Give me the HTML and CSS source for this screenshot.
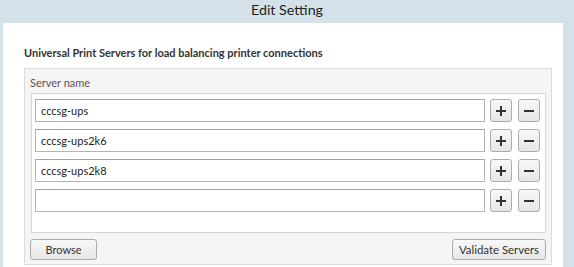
FILE: index.html
```html
<!DOCTYPE html>
<html lang="en">
<head>
  <meta charset="UTF-8" />
  <title>Edit Setting</title>
  <link rel="stylesheet" href="styles.css">
</head>
<body>
<div class="titlebar">Edit Setting</div>

<div class="panel">
  <h2 class="section-title">Universal Print Servers for load balancing printer connections</h2>

  <div class="group">
    <div class="group-header">Server name</div>

    <div class="server-list">
      <div class="server-row">
        <input type="text" class="server-input" value="cccsg-ups" />
        <button type="button" class="icon-btn add" title="Add"><span class="plus"></span></button>
        <button type="button" class="icon-btn remove" title="Remove"><span class="minus"></span></button>
      </div>
      <div class="server-row">
        <input type="text" class="server-input" value="cccsg-ups2k6" />
        <button type="button" class="icon-btn add" title="Add"><span class="plus"></span></button>
        <button type="button" class="icon-btn remove" title="Remove"><span class="minus"></span></button>
      </div>
      <div class="server-row">
        <input type="text" class="server-input" value="cccsg-ups2k8" />
        <button type="button" class="icon-btn add" title="Add"><span class="plus"></span></button>
        <button type="button" class="icon-btn remove" title="Remove"><span class="minus"></span></button>
      </div>
      <div class="server-row">
        <input type="text" class="server-input" value="" />
        <button type="button" class="icon-btn add" title="Add"><span class="plus"></span></button>
        <button type="button" class="icon-btn remove" title="Remove"><span class="minus"></span></button>
      </div>
    </div>

    <div class="group-footer">
      <button type="button" class="btn browse">Browse</button>
      <button type="button" class="btn validate">Validate Servers</button>
    </div>
  </div>
</div>
</body>
</html>
```
FILE: styles.css
```css
html, body {
  height: 100%;
}

body {
  margin: 0;
  font-family: 'Lato', sans-serif;
  font-size: 11px;
  color: #222;
  background-color: #d4e1e8;
  display: flex;
  flex-direction: column;
}

.titlebar {
  height: 23px;
  line-height: 20px;
  text-align: center;
  font-size: 14.3px;
  color: #1e1e1e;
}

.panel {
  flex: 1;
  margin: 0 11px 0 3px;
  padding: 23px 11px 0 21px;
  background: #fff;
}

.section-title {
  margin: 0 0 8px;
  font-size: 11px;
  line-height: 14px;
  font-weight: bold;
  color: #333;
}

.group {
  border: 1px solid #dcdcdc;
  background: #f5f5f5;
}

.group-header {
  padding: 7px 5px 3px;
  line-height: 14px;
  color: #555;
}

.server-list {
  margin: 0 5px 0 6px;
  padding: 5px 5px 20px 3px;
  border: 1px solid #d6d6d6;
  background: #fff;
  display: flex;
  flex-direction: column;
  gap: 7px;
}

.server-row {
  display: flex;
  height: 23px;
}

.server-input {
  flex: 1;
  min-width: 0;
  margin: 0;
  padding: 0 5px;
  box-sizing: border-box;
  height: 23px;
  border: 1px solid #b4b4b4;
  border-top-color: #a2a2a2;
  font-family: 'Lato', sans-serif;
  font-size: 11px;
  color: #222;
  outline: none;
}

.icon-btn,
.btn {
  box-sizing: border-box;
  margin: 0;
  padding: 0;
  border: 1px solid #acacac;
  border-radius: 3px;
  background: linear-gradient(#f8f8f8, #e6e6e6);
  cursor: pointer;
}

.icon-btn {
  width: 22px;
  height: 23px;
  position: relative;
}

.icon-btn.add {
  margin-left: 5px;
}

.icon-btn.remove {
  margin-left: 6px;
}

.plus,
.minus {
  position: absolute;
  left: 50%;
  top: 50%;
}

.minus {
  width: 10px;
  height: 2px;
  margin: -1px 0 0 -5px;
  background: #333;
}

.plus {
  width: 10px;
  height: 10px;
  margin: -5px 0 0 -5px;
}

.plus::before,
.plus::after {
  content: '';
  position: absolute;
  background: #333;
}

.plus::before {
  left: 0;
  top: 4px;
  width: 10px;
  height: 2px;
}

.plus::after {
  left: 4px;
  top: 0;
  width: 2px;
  height: 10px;
}

.group-footer {
  display: flex;
  justify-content: space-between;
  padding: 6px 5px 4px;
}

.btn {
  height: 21px;
  font-family: 'Lato', sans-serif;
  font-size: 11px;
  color: #333;
}

.btn.browse {
  width: 67px;
}

.btn.validate {
  width: 94px;
  font-size: 11.4px;
}
```
